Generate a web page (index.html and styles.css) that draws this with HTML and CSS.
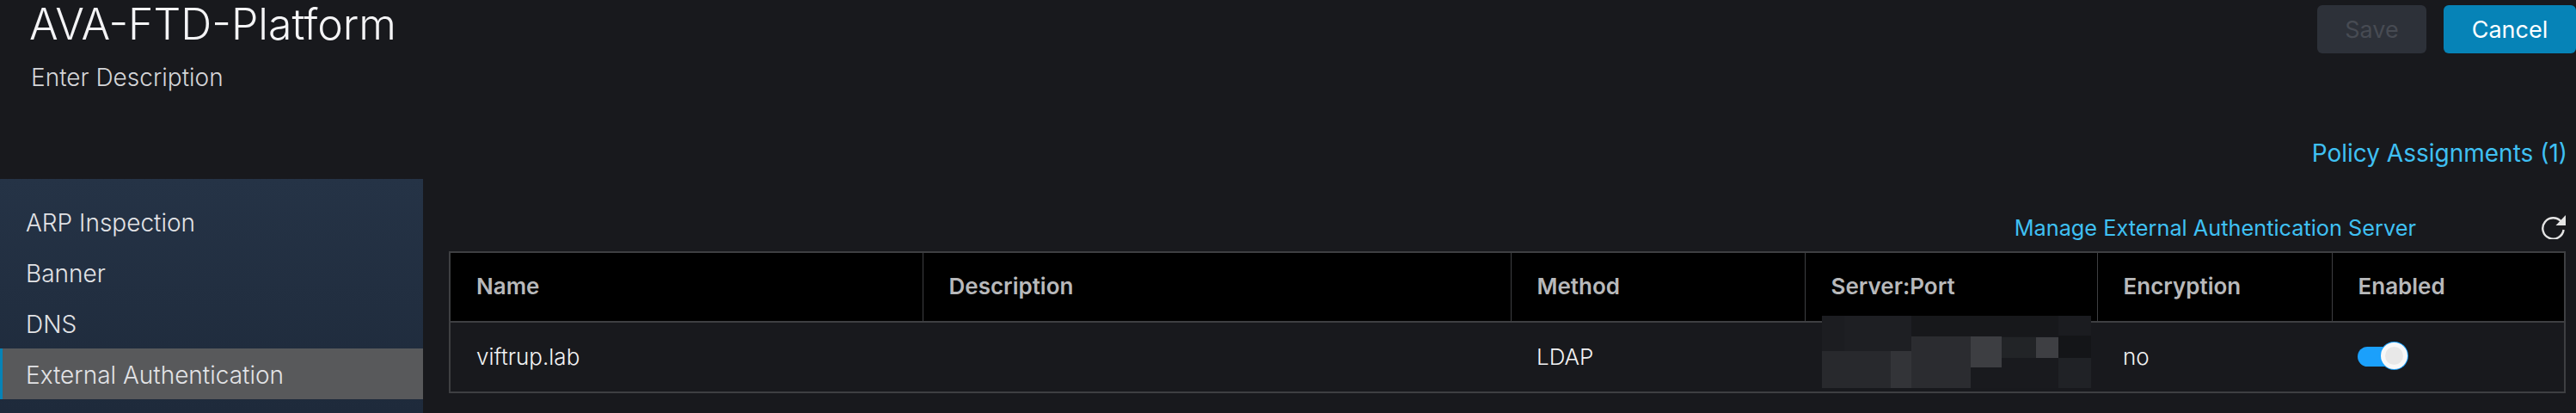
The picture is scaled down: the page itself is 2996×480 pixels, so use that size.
FILE: index.html
```html
<!DOCTYPE html>
<html lang="en">
<head>
    <meta charset="UTF-8">
    <meta name="viewport" content="width=device-width, initial-scale=1.0">
    <title>AVA-FTD-Platform</title>
    <link rel="stylesheet" href="styles.css">
</head>
<body>
    <header class="page-head">
        <div class="head-top">
            <div class="head-text">
                <h1>AVA-FTD-Platform</h1>
                <p>Enter Description</p>
            </div>
            <div class="head-actions">
                <button class="btn btn-save" disabled>Save</button>
                <button class="btn btn-cancel">Cancel</button>
            </div>
        </div>
        <a class="link policy-link" href="#">Policy Assignments (1)</a>
    </header>
    <div class="content">
        <nav class="sidebar">
            <a href="#">ARP Inspection</a>
            <a href="#">Banner</a>
            <a href="#">DNS</a>
            <a href="#" class="active">External Authentication</a>
        </nav>
        <main class="panel">
            <div class="toolbar">
                <a class="link" href="#">Manage External Authentication Server</a>
                <svg class="refresh" viewBox="0 0 28 28" width="28" height="28">
                    <path d="M23.3 8.2A12.2 12.2 0 1 0 25.6 17" fill="none" stroke="#e4e4e4" stroke-width="2.4"/>
                    <path d="M28 0v12H16.5z" fill="#e4e4e4"/>
                </svg>
            </div>
            <table class="auth-table">
                <colgroup>
                    <col class="col-name"><col class="col-desc"><col class="col-method"><col class="col-server"><col class="col-enc"><col class="col-on">
                </colgroup>
                <thead>
                    <tr>
                        <th>Name</th>
                        <th>Description</th>
                        <th>Method</th>
                        <th>Server:Port</th>
                        <th>Encryption</th>
                        <th>Enabled</th>
                    </tr>
                </thead>
                <tbody>
                    <tr>
                        <td>viftrup.lab</td>
                        <td></td>
                        <td>LDAP</td>
                        <td class="server-cell">
                            <svg class="blur-mask" viewBox="0 0 313 84" width="313" height="84">
                                <rect width="313" height="84" fill="#191a1e"/>
                                <rect width="26" height="41" fill="#1c1d21"/>
                                <rect x="26" width="78" height="41" fill="#1e1f23"/>
                                <rect x="104" width="171" height="24" fill="#17181b"/>
                                <rect x="275" width="38" height="23" fill="#1b1c20"/>
                                <rect y="41" width="80" height="43" fill="#28292d"/>
                                <rect x="80" y="41" width="24" height="43" fill="#333438"/>
                                <rect x="104" y="24" width="69" height="60" fill="#2b2c30"/>
                                <rect x="173" y="24" width="36" height="36" fill="#3d3e42"/>
                                <rect x="209" y="25" width="40" height="24" fill="#222427"/>
                                <rect x="249" y="25" width="26" height="24" fill="#3e3f43"/>
                                <rect x="275" y="23" width="38" height="26" fill="#141518"/>
                                <rect x="275" y="49" width="38" height="35" fill="#202226"/>
                            </svg>
                        </td>
                        <td>no</td>
                        <td><span class="toggle"><span class="knob"></span></span></td>
                    </tr>
                </tbody>
            </table>
        </main>
    </div>
</body>
</html>
```

FILE: styles.css
```css
* {
    box-sizing: border-box;
}
html, body {
    height: 100%;
}
body {
    margin: 0;
    background: #18191d;
    color: #e8e8ea;
    font-family: Inter, "Liberation Sans", sans-serif;
    overflow: hidden;
    display: flex;
    flex-direction: column;
}
.link {
    color: #3fc0f3;
    font-size: 25.3px;
    text-decoration: none;
}
.page-head {
    height: 208px;
    padding: 0 10px 0 34px;
    display: flex;
    flex-direction: column;
    flex-shrink: 0;
}
.head-top {
    display: flex;
    justify-content: space-between;
    margin-right: -10px;
}
.head-text h1 {
    margin: 0;
    font-size: 50px;
    font-weight: 300;
    line-height: 56px;
    color: #f4f4f6;
}
.head-text p {
    margin: 17px 0 0 2px;
    font-size: 28px;
    font-weight: 300;
    line-height: 34px;
    color: #d4d5d8;
}
.head-actions {
    display: flex;
    gap: 20px;
    padding-top: 6px;
}
.btn {
    height: 56px;
    border: none;
    border-radius: 6px;
    font-family: inherit;
    font-size: 27px;
    padding: 0;
}
.btn-save {
    width: 127px;
    background: #2d3139;
    color: #474b53;
}
.btn-cancel {
    width: 154px;
    background: #0683b7;
    color: #fff;
}
.policy-link {
    align-self: flex-end;
    margin-top: 54px;
    font-size: 28px;
}
.content {
    flex: 1;
    display: flex;
}
.sidebar {
    width: 492px;
    flex-shrink: 0;
    padding-top: 20px;
    background: linear-gradient(#253346, #1e2a3b);
    display: flex;
    flex-direction: column;
}
.sidebar a {
    height: 59px;
    padding: 2px 0 0 30px;
    display: flex;
    align-items: center;
    color: #e2e3e6;
    font-size: 28px;
    font-weight: 300;
    text-decoration: none;
}
.sidebar a.active {
    background: #58595b;
    border-left: 3px solid #0683b7;
    padding-left: 27px;
}
.panel {
    flex: 1;
    padding: 41px 12px 0 30px;
}
.toolbar {
    height: 43px;
    display: flex;
    justify-content: flex-end;
    align-items: flex-start;
    gap: 146px;
}
.toolbar .link {
    line-height: 32px;
}
.refresh {
    margin-top: 1px;
}
.auth-table {
    width: 2462px;
    border-collapse: collapse;
    table-layout: fixed;
    border: 2px solid #3e3f42;
}
.col-name { width: 550px; }
.col-desc { width: 684px; }
.col-method { width: 342px; }
.col-server { width: 340px; }
.col-enc { width: 273px; }
.auth-table th {
    height: 81px;
    padding: 0 30px 2px;
    background: #000;
    border: 1px solid #3e3f42;
    border-bottom-width: 2px;
    color: #b8b9bb;
    font-size: 26px;
    font-weight: 600;
    text-align: left;
}
.auth-table td {
    height: 82px;
    padding: 0 30px 2px;
    font-size: 26px;
    font-weight: 300;
    color: #f2f2f3;
}
.server-cell {
    position: relative;
}
.blur-mask {
    position: absolute;
    left: 20px;
    top: -8px;
    display: block;
}
.toggle {
    display: block;
    position: relative;
    width: 46px;
    height: 23px;
    border-radius: 12px;
    background: #1ba0fb;
}
.knob {
    position: absolute;
    left: 27px;
    top: -5px;
    width: 31px;
    height: 31px;
    border-radius: 50%;
    border: 5px solid #f8f8f8;
    background: #e8e8e8;
    box-shadow: 0 0 0 1px #1ba0fb;
}
```
